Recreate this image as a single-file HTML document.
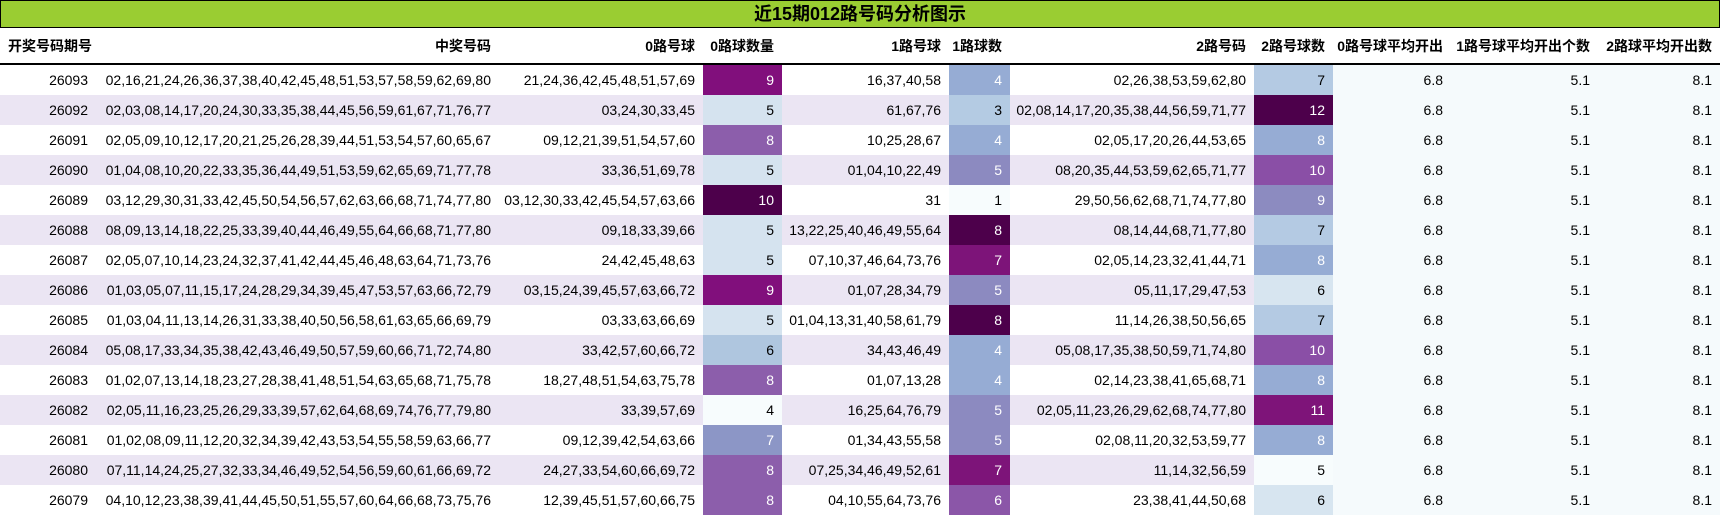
<!DOCTYPE html>
<html><head><meta charset="utf-8"><style>
html,body{margin:0;padding:0;background:#fff;}
body{width:1720px;height:516px;overflow:hidden;font-family:"Liberation Sans","Noto Sans CJK SC",sans-serif;font-size:14px;color:#000;}
.title{height:26px;background:#9acd32;border:1px solid #000;text-align:center;font-weight:bold;font-size:18px;line-height:26px;font-family:"Liberation Sans","Noto Sans CJK SC",sans-serif;}
table{border-collapse:collapse;table-layout:fixed;width:1720px;}
td,th{padding:0 8px 0 0;text-align:right;white-space:nowrap;overflow:hidden;}
td:nth-child(2),th:nth-child(2){padding-right:5px;}
th{height:35px;font-weight:bold;border-bottom:2px solid #000;}
th:first-child{text-align:left;padding-left:8px;}
td{height:30px;line-height:30px;}
tr.e td{background:#ebe5f3;}
td.a{background:#f5fafc !important;}
.w{color:#fff;}
</style></head><body>
<div class="title">近15期012路号码分析图示</div>
<table>
<colgroup><col style="width:96px"><col style="width:400px"><col style="width:207px"><col style="width:79px"><col style="width:167px"><col style="width:61px"><col style="width:244px"><col style="width:79px"><col style="width:118px"><col style="width:147px"><col style="width:122px"></colgroup>
<tr><th>开奖号码期号</th><th>中奖号码</th><th>0路号球</th><th>0路球数量</th><th>1路号球</th><th>1路球数</th><th>2路号码</th><th>2路号球数</th><th>0路号球平均开出</th><th>1路号球平均开出个数</th><th>2路球平均开出数</th></tr>
<tr><td>26093</td><td>02,16,21,24,26,36,37,38,40,42,45,48,51,53,57,58,59,62,69,80</td><td>21,24,36,42,45,48,51,57,69</td><td class="w" style="background:#810f7c">9</td><td>16,37,40,58</td><td class="w" style="background:#96acd4">4</td><td>02,26,38,53,59,62,80</td><td style="background:#b4cae3">7</td><td class="a">6.8</td><td class="a">5.1</td><td class="a">8.1</td></tr>
<tr class="e"><td>26092</td><td>02,03,08,14,17,20,24,30,33,35,38,44,45,56,59,61,67,71,76,77</td><td>03,24,30,33,45</td><td style="background:#d5e3ef">5</td><td>61,67,76</td><td style="background:#b4cbe3">3</td><td>02,08,14,17,20,35,38,44,56,59,71,77</td><td class="w" style="background:#4d004b">12</td><td class="a">6.8</td><td class="a">5.1</td><td class="a">8.1</td></tr>
<tr><td>26091</td><td>02,05,09,10,12,17,20,21,25,26,28,39,44,51,53,54,57,60,65,67</td><td>09,12,21,39,51,54,57,60</td><td class="w" style="background:#8c5eab">8</td><td>10,25,28,67</td><td class="w" style="background:#96acd4">4</td><td>02,05,17,20,26,44,53,65</td><td class="w" style="background:#96acd4">8</td><td class="a">6.8</td><td class="a">5.1</td><td class="a">8.1</td></tr>
<tr class="e"><td>26090</td><td>01,04,08,10,20,22,33,35,36,44,49,51,53,59,62,65,69,71,77,78</td><td>33,36,51,69,78</td><td style="background:#d5e3ef">5</td><td>01,04,10,22,49</td><td class="w" style="background:#8c8ac0">5</td><td>08,20,35,44,53,59,62,65,71,77</td><td class="w" style="background:#8a4fa6">10</td><td class="a">6.8</td><td class="a">5.1</td><td class="a">8.1</td></tr>
<tr><td>26089</td><td>03,12,29,30,31,33,42,45,50,54,56,57,62,63,66,68,71,74,77,80</td><td>03,12,30,33,42,45,54,57,63,66</td><td class="w" style="background:#4d004b">10</td><td>31</td><td style="background:#f7fcfd">1</td><td>29,50,56,62,68,71,74,77,80</td><td class="w" style="background:#8c8bc0">9</td><td class="a">6.8</td><td class="a">5.1</td><td class="a">8.1</td></tr>
<tr class="e"><td>26088</td><td>08,09,13,14,18,22,25,33,39,40,44,46,49,55,64,66,68,71,77,80</td><td>09,18,33,39,66</td><td style="background:#d5e3ef">5</td><td>13,22,25,40,46,49,55,64</td><td class="w" style="background:#4d004b">8</td><td>08,14,44,68,71,77,80</td><td style="background:#b4cae3">7</td><td class="a">6.8</td><td class="a">5.1</td><td class="a">8.1</td></tr>
<tr><td>26087</td><td>02,05,07,10,14,23,24,32,37,41,42,44,45,46,48,63,64,71,73,76</td><td>24,42,45,48,63</td><td style="background:#d5e3ef">5</td><td>07,10,37,46,64,73,76</td><td class="w" style="background:#7d1479">7</td><td>02,05,14,23,32,41,44,71</td><td class="w" style="background:#96acd4">8</td><td class="a">6.8</td><td class="a">5.1</td><td class="a">8.1</td></tr>
<tr class="e"><td>26086</td><td>01,03,05,07,11,15,17,24,28,29,34,39,45,47,53,57,63,66,72,79</td><td>03,15,24,39,45,57,63,66,72</td><td class="w" style="background:#810f7c">9</td><td>01,07,28,34,79</td><td class="w" style="background:#8c8ac0">5</td><td>05,11,17,29,47,53</td><td style="background:#d7e5f0">6</td><td class="a">6.8</td><td class="a">5.1</td><td class="a">8.1</td></tr>
<tr><td>26085</td><td>01,03,04,11,13,14,26,31,33,38,40,50,56,58,61,63,65,66,69,79</td><td>03,33,63,66,69</td><td style="background:#d5e3ef">5</td><td>01,04,13,31,40,58,61,79</td><td class="w" style="background:#4d004b">8</td><td>11,14,26,38,50,56,65</td><td style="background:#b4cae3">7</td><td class="a">6.8</td><td class="a">5.1</td><td class="a">8.1</td></tr>
<tr class="e"><td>26084</td><td>05,08,17,33,34,35,38,42,43,46,49,50,57,59,60,66,71,72,74,80</td><td>33,42,57,60,66,72</td><td style="background:#afc6df">6</td><td>34,43,46,49</td><td class="w" style="background:#96acd4">4</td><td>05,08,17,35,38,50,59,71,74,80</td><td class="w" style="background:#8a4fa6">10</td><td class="a">6.8</td><td class="a">5.1</td><td class="a">8.1</td></tr>
<tr><td>26083</td><td>01,02,07,13,14,18,23,27,28,38,41,48,51,54,63,65,68,71,75,78</td><td>18,27,48,51,54,63,75,78</td><td class="w" style="background:#8c5eab">8</td><td>01,07,13,28</td><td class="w" style="background:#96acd4">4</td><td>02,14,23,38,41,65,68,71</td><td class="w" style="background:#96acd4">8</td><td class="a">6.8</td><td class="a">5.1</td><td class="a">8.1</td></tr>
<tr class="e"><td>26082</td><td>02,05,11,16,23,25,26,29,33,39,57,62,64,68,69,74,76,77,79,80</td><td>33,39,57,69</td><td style="background:#f7fcfd">4</td><td>16,25,64,76,79</td><td class="w" style="background:#8c8ac0">5</td><td>02,05,11,23,26,29,62,68,74,77,80</td><td class="w" style="background:#7e1479">11</td><td class="a">6.8</td><td class="a">5.1</td><td class="a">8.1</td></tr>
<tr><td>26081</td><td>01,02,08,09,11,12,20,32,34,39,42,43,53,54,55,58,59,63,66,77</td><td>09,12,39,42,54,63,66</td><td class="w" style="background:#8c96c6">7</td><td>01,34,43,55,58</td><td class="w" style="background:#8c8ac0">5</td><td>02,08,11,20,32,53,59,77</td><td class="w" style="background:#96acd4">8</td><td class="a">6.8</td><td class="a">5.1</td><td class="a">8.1</td></tr>
<tr class="e"><td>26080</td><td>07,11,14,24,25,27,32,33,34,46,49,52,54,56,59,60,61,66,69,72</td><td>24,27,33,54,60,66,69,72</td><td class="w" style="background:#8c5eab">8</td><td>07,25,34,46,49,52,61</td><td class="w" style="background:#7d1479">7</td><td>11,14,32,56,59</td><td style="background:#f7fcfd">5</td><td class="a">6.8</td><td class="a">5.1</td><td class="a">8.1</td></tr>
<tr><td>26079</td><td>04,10,12,23,38,39,41,44,45,50,51,55,57,60,64,66,68,73,75,76</td><td>12,39,45,51,57,60,66,75</td><td class="w" style="background:#8c5eab">8</td><td>04,10,55,64,73,76</td><td class="w" style="background:#8b56a8">6</td><td>23,38,41,44,50,68</td><td style="background:#d7e5f0">6</td><td class="a">6.8</td><td class="a">5.1</td><td class="a">8.1</td></tr>
</table>
</body></html>
